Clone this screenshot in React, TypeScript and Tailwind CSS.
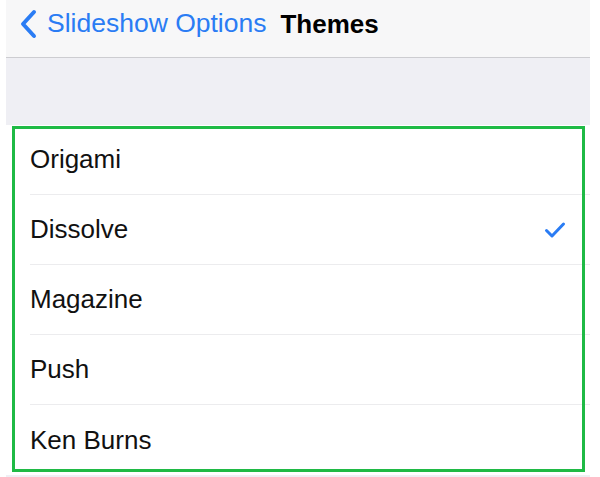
const themes = ["Origami", "Dissolve", "Magazine", "Push", "Ken Burns"];

const ChevronLeft = () => (
  <svg width="18" height="30" viewBox="0 0 18 30" fill="none">
    <path
      d="M15 3 L4 15 L15 27"
      stroke="#2a7cf4"
      strokeWidth="4"
      strokeLinecap="round"
      strokeLinejoin="round"
    />
  </svg>
);

const Check = () => (
  <svg width="22" height="18" viewBox="0 0 22 18" fill="none">
    <path
      d="M2.5 9.5 L8 15 L19.5 3"
      stroke="#2a7cf4"
      strokeWidth="3"
      strokeLinecap="round"
      strokeLinejoin="round"
    />
  </svg>
);

const App = () => {
  return (
    <div className="w-[600px] h-[477px] bg-white px-[6px] overflow-hidden font-['Liberation_Sans',Arial,sans-serif]">
      <div className="w-[584px] h-full flex flex-col bg-[#efeff4]">
        <div className="h-[58px] shrink-0 flex items-center bg-[#f7f7f8] border-b border-[#cdcdd1] pl-[13px] pb-[10px]">
          <ChevronLeft />
          <span className="ml-[10px] text-[26.5px] text-[#2a7cf4] leading-none">
            Slideshow Options
          </span>
          <span className="ml-[14px] text-[26px] font-bold text-black leading-none">
            Themes
          </span>
        </div>
        <div className="h-[67px] shrink-0" />
        <div className="relative bg-white">
          {themes.map((t, i) => (
            <div key={t} className="h-[70px] pl-[24px] flex">
              <div
                className={`flex-1 flex items-center ${
                  i < themes.length - 1 ? "border-b border-[#ececee]" : ""
                }`}
              >
                <span className="flex-1 text-[26px] text-[#111]">{t}</span>
                {t === "Dissolve" && (
                  <span className="pr-[24px]">
                    <Check />
                  </span>
                )}
              </div>
            </div>
          ))}
          <div className="absolute left-[6px] top-[1px] w-[573px] h-[346px] border-[3px] border-[#1fba45] pointer-events-none" />
        </div>
      </div>
    </div>
  );
};

export default App;
